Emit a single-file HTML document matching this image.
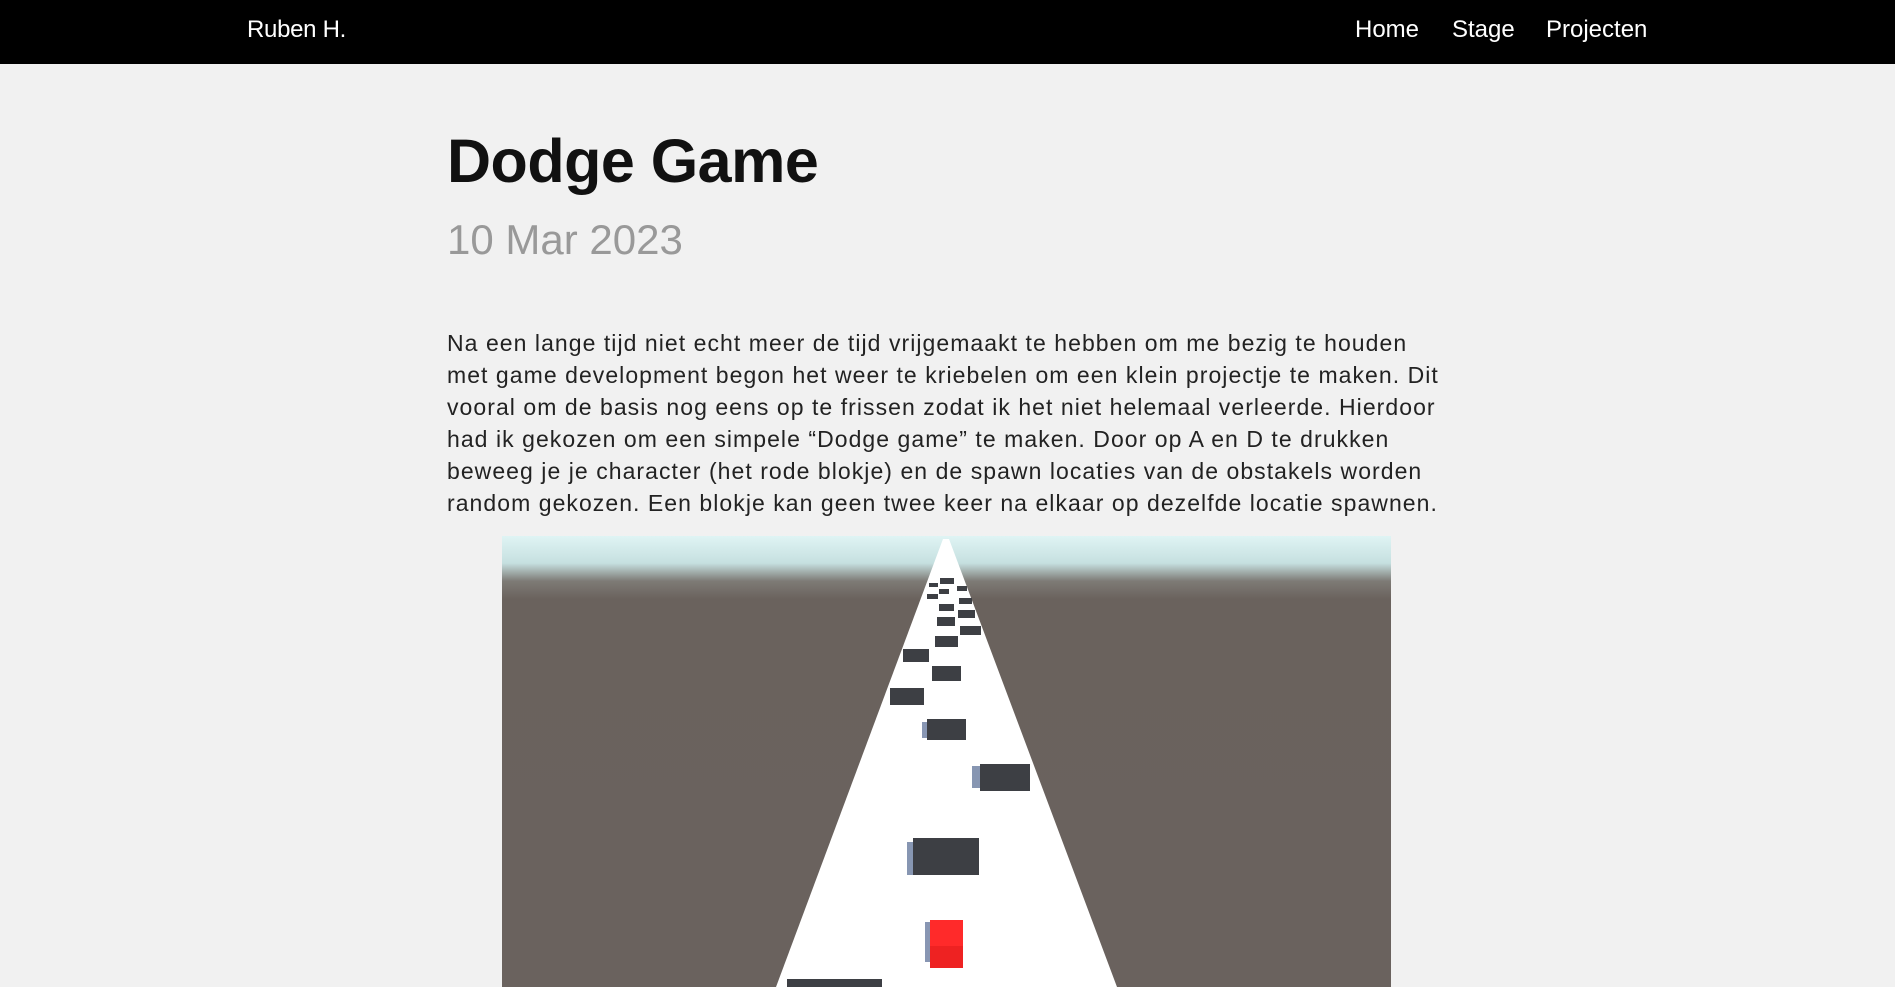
<!DOCTYPE html>
<html><head><meta charset="utf-8"><style>
*{margin:0;padding:0;box-sizing:border-box}
html,body{width:1895px;height:987px;overflow:hidden;background:#f1f1f1;font-family:"Liberation Sans",sans-serif}
nav{position:absolute;left:0;top:0;width:1895px;height:64px;background:#000;color:#fff;font-size:24px}
nav span{position:absolute;top:16px}
h1{position:absolute;left:447px;top:126px;font-size:61px;font-weight:bold;color:#111;letter-spacing:-0.5px}
.date{position:absolute;left:447px;top:216px;font-size:42px;color:#999}
p{position:absolute;left:447px;top:327px;width:1100px;font-size:23px;line-height:32px;color:#222;letter-spacing:1.05px;white-space:nowrap}
svg{position:absolute;left:502px;top:536px}
</style></head><body>
<nav><span style="left:247px;letter-spacing:-0.3px">Ruben H.</span><span style="left:1355px">Home</span><span style="left:1452px">Stage</span><span style="left:1546px">Projecten</span></nav>
<h1>Dodge Game</h1>
<div class="date">10 Mar 2023</div>
<p>Na een lange tijd niet echt meer de tijd vrijgemaakt te hebben om me bezig te houden<br>met game development begon het weer te kriebelen om een klein projectje te maken. Dit<br>vooral om de basis nog eens op te frissen zodat ik het niet helemaal verleerde. Hierdoor<br>had ik gekozen om een simpele “Dodge game” te maken. Door op A en D te drukken<br>beweeg je je character (het rode blokje) en de spawn locaties van de obstakels worden<br>random gekozen. Een blokje kan geen twee keer na elkaar op dezelfde locatie spawnen.</p>
<svg width="889" height="451" viewBox="0 0 889 451">
<defs><linearGradient id="g" x1="0" y1="0" x2="0" y2="1"><stop offset="0" stop-color="#dff4f4"/><stop offset="0.06" stop-color="#c6e0e0"/><stop offset="0.1" stop-color="#7e7b76"/><stop offset="0.14" stop-color="#6a625d"/><stop offset="1" stop-color="#6a625e"/></linearGradient></defs>
<rect width="889" height="451" fill="url(#g)"/>
<polygon points="441,3 447,3 615,451 274,451" fill="#fff"/>
<g fill="#6a7ca0" opacity="0.8">
<rect x="405" y="306" width="8" height="33"/><rect x="470" y="230" width="9" height="22"/><rect x="420" y="186" width="6" height="16"/><rect x="423" y="386" width="6" height="40"/>
</g>
<g fill="#3d3f44">
<rect x="411" y="302" width="66" height="37"/><rect x="478" y="228" width="50" height="27"/><rect x="425" y="183" width="39" height="21"/><rect x="388" y="152" width="34" height="17"/><rect x="430" y="130" width="29" height="15"/><rect x="401" y="113" width="26" height="13"/><rect x="433" y="100" width="23" height="11"/><rect x="458" y="90" width="21" height="9"/><rect x="435" y="81" width="18" height="9"/><rect x="456" y="74" width="17" height="8"/><rect x="437" y="68" width="15" height="7"/><rect x="457" y="62" width="13" height="6"/><rect x="425" y="58" width="11" height="5"/><rect x="437" y="53" width="10" height="5"/><rect x="455" y="50" width="10" height="5"/><rect x="427" y="47" width="9" height="4"/><rect x="438" y="42" width="14" height="6"/><rect x="285" y="443" width="95" height="8"/>
</g>
<rect x="428" y="384" width="33" height="48" fill="#ee2222"/><rect x="428" y="384" width="33" height="26" fill="#ff2a2a"/>
</svg>
</body></html>
